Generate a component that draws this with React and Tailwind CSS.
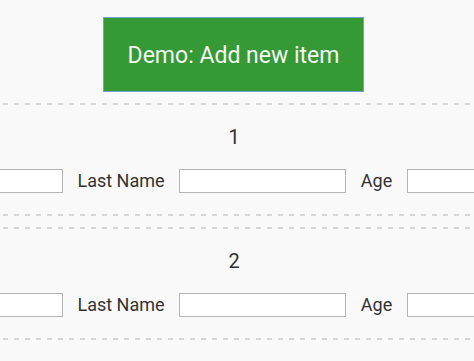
export default function App() {
  const Dash = () => (
    <div className="h-[2px] w-full bg-[repeating-linear-gradient(90deg,transparent_0_3px,#d6d6d6_3px_8px,transparent_8px_11px)]" />
  );
  const Item = ({ n }) => (
    <div className="flex flex-col">
      <Dash />
      <div className="pt-[20px] text-center text-[20px] leading-[24px] text-[#333] pr-[6px]">{n}</div>
      <div className="mt-[20px] flex items-center -ml-[104px] whitespace-nowrap">
        <input className="h-[24px] w-[167px] shrink-0 border border-[#b5b5b5] bg-white outline-none" />
        <span className="w-[116px] shrink-0 text-center text-[18px] leading-[24px] text-[#333]">Last Name</span>
        <input className="h-[24px] w-[167px] shrink-0 border border-[#b5b5b5] bg-white outline-none" />
        <span className="w-[61px] shrink-0 text-center text-[18px] leading-[24px] text-[#333]">Age</span>
        <input className="h-[24px] w-[167px] shrink-0 border border-[#b5b5b5] bg-white outline-none" />
      </div>
      <div className="mt-[21px]">
        <Dash />
      </div>
    </div>
  );
  return (
    <div className="h-[361px] w-[474px] overflow-hidden bg-[#f9f9f9] font-['Roboto',sans-serif]">
      <div className="pt-[17px]">
        <button className="ml-[103px] flex h-[75px] w-[261px] items-center justify-center border border-[#6fa3d6] bg-[#359a35] pt-[3px] text-[23px] text-[#f4f7f4]">
          Demo: Add new item
        </button>
      </div>
      <div className="mt-[11px] flex flex-col gap-[11px]">
        <Item n="1" />
        <Item n="2" />
      </div>
    </div>
  );
}
